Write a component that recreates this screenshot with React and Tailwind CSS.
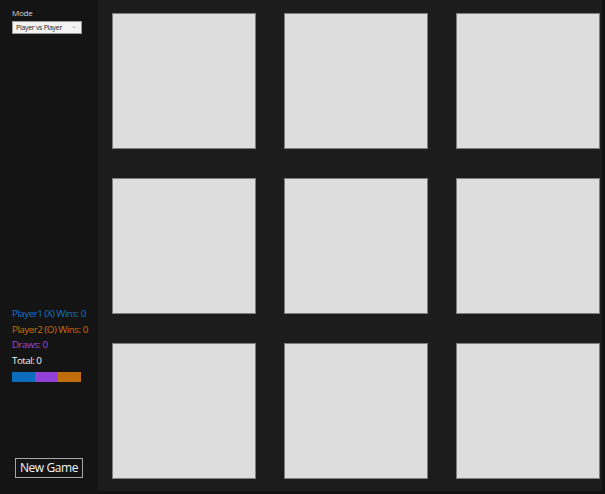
import React from "react";

// ----------------------------------------------------------------------

const CELLS = Array.from({ length: 9 }, (_, i) => i);

function Sidebar() {
  return (
    <div className="w-[98px] shrink-0 bg-[#141414] flex flex-col px-3 pt-[8px] pb-[16px] whitespace-nowrap font-['Open_Sans',sans-serif]">
      <span className="text-[8px] leading-[10px] text-[#d8d8d8] tracking-[-0.2px]">Mode</span>
      <div className="mt-[3px] w-[70px] h-[13px] bg-[#f3f3f3] border border-[#9a9a9a] flex items-center justify-between pl-[3px] pr-[5px]">
        <span className="text-[7px] leading-none text-[#222] tracking-[-0.3px]">Player vs Player</span>
        <svg width="4" height="3" viewBox="0 0 4 3">
          <path d="M0.5 0.5 L2 2 L3.5 0.5" stroke="#999" strokeWidth="0.7" fill="none" />
        </svg>
      </div>

      <div className="mt-auto flex flex-col text-[9.8px] leading-[15.5px] tracking-[-0.5px]">
        <span className="text-[#1673c8]">Player1 (X) Wins: 0</span>
        <span className="text-[#c8710e]">Player2 (O) Wins: 0</span>
        <span className="text-[#9a48dc]">Draws: 0</span>
        <span className="text-[#f2f2f2]">Total: 0</span>
      </div>
      <div className="mt-[4px] flex w-[69px] h-[10px]">
        <div className="flex-1 bg-[#0b6cbc]" />
        <div className="flex-1 bg-[#9241d6]" />
        <div className="flex-1 bg-[#c06d0b]" />
      </div>

      <button className="mt-[76px] ml-[3px] w-[68px] h-[20px] border border-[#a8a8a8] text-[12px] leading-none tracking-[-0.4px] text-[#f4f4f4] flex items-center justify-center">
        New Game
      </button>
    </div>
  );
}

export default function App() {
  return (
    <div className="w-[605px] h-[494px] flex bg-[#111111] overflow-hidden">
      <Sidebar />
      <div className="flex-1 flex flex-col">
        <div className="flex-1 flex">
          <div className="flex-1 bg-[#1c1c1c] pl-[14px] pt-[13px]">
            <div className="grid grid-cols-[144px_144px_144px] grid-rows-[136px_136px_136px] gap-x-[28px] gap-y-[29px]">
              {CELLS.map((i) => (
                <div key={i} className="bg-[#dddddd] border border-[#7c7c7c]" />
              ))}
            </div>
          </div>
          <div className="w-[3px] bg-[#111111]" />
        </div>
        <div className="h-[3px] bg-[#111111]" />
      </div>
    </div>
  );
}
